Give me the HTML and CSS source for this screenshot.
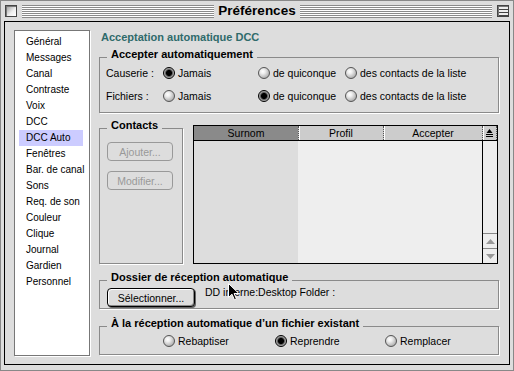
FILE: index.html
```html
<!DOCTYPE html>
<html lang="fr">
<head>
    <meta charset="UTF-8">
    <meta name="viewport" content="width=device-width, initial-scale=1.0">
    <link rel="stylesheet" href="styles.css">
    <title>Préférences</title>
</head>
<body>
    <div class="window">
        <div class="titlebar">
            <span class="box close"></span>
            <span class="stripes"></span>
            <span class="title">Préférences</span>
            <span class="stripes"></span>
            <span class="box zoom"></span>
        </div>

        <div class="frame">
            <!-- Category list -->
            <ul class="sidebar">
                <li>Général</li>
                <li>Messages</li>
                <li>Canal</li>
                <li>Contraste</li>
                <li>Voix</li>
                <li>DCC</li>
                <li class="selected">DCC Auto</li>
                <li>Fenêtres</li>
                <li>Bar. de canal</li>
                <li>Sons</li>
                <li>Req. de son</li>
                <li>Couleur</li>
                <li>Clique</li>
                <li>Journal</li>
                <li>Gardien</li>
                <li>Personnel</li>
            </ul>

            <div class="main">
                <h2 class="heading">Acceptation automatique DCC</h2>

                <fieldset class="group accept">
                    <legend>Accepter automatiquement</legend>
                    <div class="choice-grid">
                        <span>Causerie :</span>
                        <label><span class="radio on"></span>Jamais</label>
                        <label><span class="radio"></span>de quiconque</label>
                        <label><span class="radio"></span>des contacts de la liste</label>

                        <span>Fichiers :</span>
                        <label><span class="radio"></span>Jamais</label>
                        <label><span class="radio on"></span>de quiconque</label>
                        <label><span class="radio"></span>des contacts de la liste</label>
                    </div>
                </fieldset>

                <div class="contacts-row">
                    <fieldset class="group contacts">
                        <legend>Contacts</legend>
                        <div class="button-stack">
                            <button class="btn" disabled>Ajouter...</button>
                            <button class="btn" disabled>Modifier...</button>
                        </div>
                    </fieldset>

                    <div class="table">
                        <div class="thead">
                            <div class="th sorted">Surnom</div>
                            <div class="th">Profil</div>
                            <div class="th">Accepter</div>
                            <div class="th sort-icon">
                                <svg width="9" height="10" viewBox="0 0 9 10">
                                    <path d="M4.5 1 L1.5 5 H7.5 Z" fill="#000"/>
                                    <rect x="1" y="6" width="7" height="1" fill="#000"/>
                                    <rect x="1" y="8" width="7" height="1" fill="#000"/>
                                </svg>
                            </div>
                        </div>
                        <div class="tbody">
                            <div class="col sorted"></div>
                            <div class="col"></div>
                            <div class="col"></div>
                            <div class="scroll">
                                <div class="track"></div>
                                <div class="arrow">
                                    <svg width="9" height="5" viewBox="0 0 9 5"><path d="M4.5 0 L9 5 H0 Z" fill="#999"/></svg>
                                </div>
                                <div class="arrow">
                                    <svg width="9" height="5" viewBox="0 0 9 5"><path d="M0 0 H9 L4.5 5 Z" fill="#999"/></svg>
                                </div>
                            </div>
                        </div>
                    </div>
                </div>

                <fieldset class="group folder">
                    <legend>Dossier de réception automatique</legend>
                    <div class="folder-row">
                        <button class="sel-btn">Sélectionner...</button>
                        <span class="path">DD interne:Desktop Folder :</span>
                    </div>
                </fieldset>

                <fieldset class="group existing">
                    <legend>À la réception automatique d’un fichier existant</legend>
                    <div class="existing-row">
                        <label><span class="radio"></span>Rebaptiser</label>
                        <label><span class="radio on"></span>Reprendre</label>
                        <label><span class="radio"></span>Remplacer</label>
                    </div>
                </fieldset>
            </div>
        </div>

        <!-- mouse pointer -->
        <svg class="cursor" width="12" height="18" viewBox="0 0 12 18">
            <path d="M0.5 0.5 V14.5 L4 11.2 L6.4 16.8 L8.4 15.9 L6.1 10.5 H10.8 Z" fill="#000" stroke="#fff" stroke-width="1"/>
        </svg>
    </div>
</body>
</html>
```

FILE: styles.css
```css
body {
    margin: 0;
    background-color: #dddddd;
    font-family: "Liberation Sans", Arial, sans-serif;
    color: #000;
}

.window {
    position: relative;
    width: 514px;
    height: 371px;
    box-sizing: border-box;
    border: 1px solid #888;
    background-color: #dddddd;
}

/* Title bar */
.titlebar {
    height: 20px;
    display: flex;
    align-items: center;
    padding: 0 4px;
}

.box {
    width: 12px;
    height: 12px;
    box-sizing: border-box;
    border: 1px solid #444;
    background: linear-gradient(135deg, #999 0%, #eee 60%, #fff 100%);
    box-shadow: inset 1px 1px 0 #777;
}

.box.zoom {
    background: repeating-linear-gradient(to bottom, #eee 0 2px, #444 2px 3px);
    background-position: 0 1px;
}

.stripes {
    flex: 1;
    height: 13px;
    margin: 0 5px;
    background: repeating-linear-gradient(to bottom, #8a8a8a 0 1px, #fff 1px 2px);
}

.close + .stripes {
    margin-right: 0;
}

.title + .stripes {
    margin-left: 0;
}

.title {
    font-size: 13.5px;
    font-weight: bold;
    padding: 0 4px;
    line-height: 20px;
}

/* Main frame */
.frame {
    margin: 0 3px;
    height: 344px;
    box-sizing: border-box;
    border: 1px solid #000;
    display: flex;
    padding: 8px 0 0 9px;
}

.sidebar {
    list-style: none;
    margin: 0;
    padding: 3px 0 0;
    width: 76px;
    height: 326px;
    box-sizing: border-box;
    background-color: #fff;
    border: 1px solid #777;
    box-shadow: 1px 1px 0 #fff;
}

.sidebar li {
    height: 16px;
    line-height: 16px;
    margin: 0 6px 0 4px;
    padding-left: 7px;
    font-size: 10px;
    white-space: nowrap;
}

.sidebar li.selected {
    background-color: #ccccff;
}

.main {
    margin-left: 9px;
    width: 400px;
    font-size: 10.5px;
}

.heading {
    margin: 0;
    padding-left: 2px;
    font-size: 11px;
    line-height: 14px;
    color: #2f6b6b;
}

/* Group boxes */
.group {
    margin: 0;
    padding: 0;
    min-width: 0;
    border: 1px solid #8a8a8a;
    box-shadow: 1px 1px 0 #fff;
}

.group legend {
    margin-left: 7px;
    padding: 0 4px 6px;
    font-size: 11px;
    font-weight: bold;
    line-height: 12px;
}

.accept {
    margin-top: 4px;
}

.choice-grid {
    display: grid;
    grid-template-columns: 57px 95px 87px auto;
    grid-auto-rows: 14px;
    row-gap: 9px;
    align-items: center;
    padding: 0 0 9px 6px;
}

label {
    display: flex;
    align-items: center;
    gap: 3px;
    white-space: nowrap;
}

.radio {
    width: 12px;
    height: 12px;
    box-sizing: border-box;
    border-radius: 50%;
    border: 1px solid #555;
    background: radial-gradient(circle at 38% 35%, #fff 0, #eee 25%, #aaa 80%, #888 100%);
}

.radio.on {
    border-color: #000;
    background: radial-gradient(circle at 50% 50%, #000 0 2.6px, #444 3.2px, #888 4px, #bbb 5px);
}

/* Contacts */
.contacts-row {
    display: flex;
    align-items: flex-start;
    margin-top: 6px;
}

.contacts {
    width: 84px;
    height: 145px;
    box-sizing: border-box;
}

.button-stack {
    display: flex;
    flex-direction: column;
    gap: 10px;
    padding: 5px 0 0 7px;
}

.btn {
    width: 66px;
    height: 19px;
    box-sizing: border-box;
    padding: 0;
    border: 1px solid #999;
    border-radius: 4px;
    background-color: #dddddd;
    color: #999;
    font-family: "Liberation Sans", Arial, sans-serif;
    font-size: 10.5px;
}

.table {
    margin: 6px 0 0 10px;
    width: 305px;
    height: 139px;
    box-sizing: border-box;
    border: 1px solid #000;
    display: flex;
    flex-direction: column;
}

.thead,
.tbody {
    display: grid;
    grid-template-columns: 104px 85px 99px 15px;
}

.thead {
    height: 15px;
    box-sizing: border-box;
    border-bottom: 1px solid #000;
}

.th {
    background-color: #cccccc;
    text-align: center;
    line-height: 14px;
    border-left: 1px dotted #555;
    box-shadow: inset 1px 0 0 #fff;
}

.th.sorted {
    background-color: #8a8a8a;
    border-left: none;
    box-shadow: none;
}

.sort-icon {
    border-right: 1px dotted #555;
    display: flex;
    align-items: center;
    justify-content: center;
}

.tbody {
    flex: 1;
}

.col {
    background-color: #eeeeee;
}

.col.sorted {
    background-color: #dddddd;
}

.scroll {
    border-left: 1px solid #000;
    background-color: #eeeeee;
    display: flex;
    flex-direction: column;
}

.track {
    flex: 1;
}

.arrow {
    height: 15px;
    box-sizing: border-box;
    border-top: 1px solid #888;
    display: flex;
    align-items: center;
    justify-content: center;
}

/* Folder */
.folder {
    margin-top: 7px;
}

.folder-row {
    display: flex;
    align-items: flex-start;
    padding: 0 0 1px 7px;
}

.sel-btn {
    width: 88px;
    height: 19px;
    margin-top: -1px;
    box-sizing: border-box;
    padding: 0;
    border: 1px solid #000;
    border-radius: 4px;
    background-color: #dddddd;
    box-shadow: inset 1px 1px 0 #fff, inset -1px -1px 0 #888, 1px 1px 0 #666;
    font-family: "Liberation Sans", Arial, sans-serif;
    font-size: 10.5px;
    color: #000;
}

.path {
    margin: -4px 0 0 10px;
    line-height: 14px;
}

/* Existing file */
.existing {
    margin-top: 8px;
}

.existing-row {
    display: grid;
    grid-template-columns: 112px 110px auto;
    height: 12px;
    align-items: center;
    padding: 0 0 7px 63px;
}

.cursor {
    position: absolute;
    left: 227px;
    top: 282px;
}
```
